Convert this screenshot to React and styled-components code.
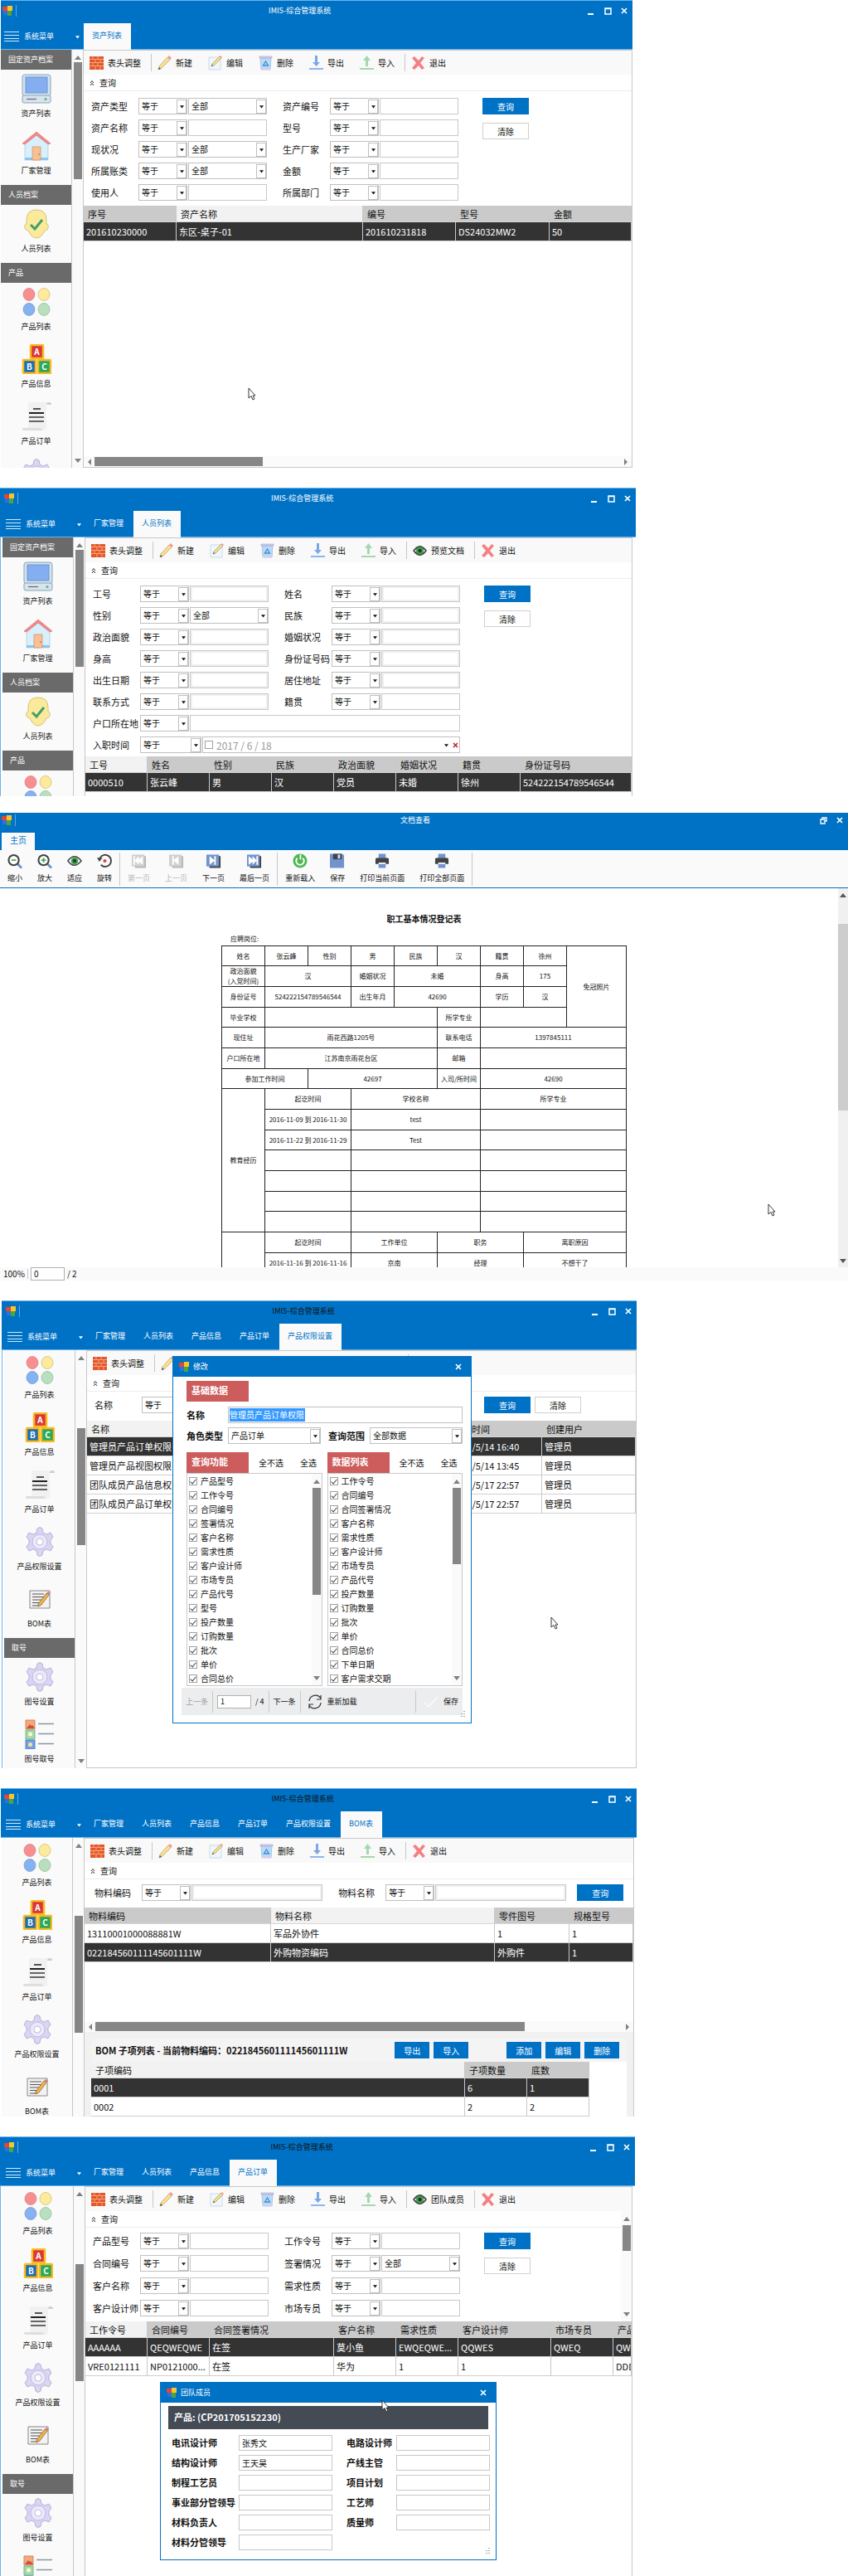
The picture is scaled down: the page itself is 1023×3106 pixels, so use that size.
import React, { useId } from 'react'
import styled, { createGlobalStyle, css } from 'styled-components'

const BLUE = '#0072c6'

const GlobalStyle = createGlobalStyle`
  * {
    box-sizing: border-box;
  }

  body {
    margin: 0;
    background: #ffffff;
    color: #111111;
    font-family: 'Noto Sans CJK SC', 'Noto Sans', sans-serif;
    font-size: 11px;
    line-height: 16px;
  }

  button, input, select {
    font: inherit;
    color: inherit;
    margin: 0;
    padding: 0;
    border: 0;
    border-radius: 0;
    background: none;
    outline: none;
  }

  a {
    color: inherit;
    text-decoration: none;
  }
`

/* ---------- window frame ---------- */

const Page = styled.main`
  display: flex;
  flex-direction: column;
  gap: 24px;
  overflow: hidden;
`

const WindowFrame = styled.section`
  position: relative;
  width: ${p => p.$width || '75%'};
  margin-left: ${p => p.$left || 0}px;
`

const Chrome = styled.header`
  height: 60px;
  padding-left: ${p => p.$inset}px;
  background: ${BLUE};
  border-top: 1px solid #6cb4ea;
  border-bottom: 1px solid #6cb4ea;
  color: #ffffff;
`

const TitleRow = styled.div`
  display: flex;
  align-items: center;
  height: 24px;
  padding-left: 2px;
`

const LogoBox = styled.span`
  display: flex;
  align-items: center;
  height: 14px;
  padding-right: 4px;
  border-right: 1px solid #5fa6dc;
`

const Title = styled.h1`
  flex: 1;
  margin: 0;
  font-size: 9px;
  font-weight: 400;
  text-align: center;
  color: ${p => (p.$dark ? '#111111' : '#ffffff')};
`

const FrameButton = styled.button`
  display: flex;
  align-items: center;
  justify-content: center;
  width: 20px;
  height: 16px;
`

const TabRow = styled.nav`
  display: flex;
  gap: 1px;
  height: 35px;
  padding-top: 3px;
`

const MenuButton = styled.button`
  display: flex;
  flex: none;
  align-items: center;
  gap: 6px;
  width: 99px;
  padding: 0 4px;
  font-size: 9px;

  svg:last-child {
    margin-left: auto;
  }
`

const Tab = styled.a`
  padding: 6px 11px 0 10px;
  font-size: 9px;
  line-height: 18px;
  white-space: nowrap;
  ${p => p.$active && css`
    background: #fafafa;
    color: ${BLUE};
  `}
`

const Body = styled.div`
  display: grid;
  grid-template-columns: 99px minmax(0, 1fr);
  min-height: ${p => p.$min}px;
  padding: 0 ${p => p.$right || 0}px 0 ${p => p.$inset}px;
  border-left: ${p => (p.$inset > 1 ? '1px solid #6cb4ea' : '0')};
`

const Content = styled.div`
  display: flex;
  flex-direction: column;
  border: 1px solid #c8c8c8;
  border-bottom-width: ${p => (p.$cut ? 0 : 1)}px;
`

/* ---------- sidebar ---------- */

const Sidebar = styled.aside`
  display: flex;
  height: 0;
  min-height: 100%;
  background: #fafafa;
`

const SideList = styled.div`
  flex: 1;
  height: 100%;
  padding-top: ${p => (p.$scrolled ? 1 : 0)}px;
  overflow: hidden;
  border-right: 1px solid #c8c8c8;
`

const SideHeading = styled.h2`
  height: 24px;
  margin: 0;
  padding-left: 9px;
  background: #6a6a6a;
  color: #ffffff;
  font-size: 9px;
  font-weight: 400;
  line-height: 23px;

  * + & {
    margin-top: 1px;
  }
`

const SideItem = styled.a`
  display: flex;
  flex-direction: column;
  align-items: center;
  gap: 5px;
  height: 69px;
  padding-top: 5px;
  font-size: 9px;
  line-height: 14px;
`

const VBar = styled.div`
  display: flex;
  flex-direction: column;
  align-items: center;
  justify-content: space-between;
  width: ${p => p.$width || 13}px;
  padding: 5px 0;
  background: #fafafa;
`

const VThumb = styled.span`
  width: 10px;
  height: ${p => p.$size}px;
  margin: ${p => p.$top}px 0 auto;
  background: #868686;
`

const HBar = styled.div`
  display: flex;
  align-items: center;
  gap: 2px;
  height: 13px;
  padding: 0 3px;
  background: #fafafa;
`

const HThumb = styled.span`
  width: ${p => p.$width};
  height: 11px;
  margin-right: auto;
  background: #868686;
`

/* ---------- toolbar and query form ---------- */

const Toolbar = styled.div`
  display: flex;
  align-items: center;
  height: 29px;
  background: #f9f9f9;
  font-size: 10px;
`

const ToolButton = styled.button`
  display: flex;
  align-items: center;
  gap: 5px;
  padding: 0 12px 0 7px;
  white-space: nowrap;
`

const Divider = styled.i`
  flex: none;
  width: 1px;
  height: ${p => p.$height || 21}px;
  background: #c8c8c8;
`

const QueryHead = styled.div`
  display: flex;
  align-items: center;
  gap: 6px;
  height: 20px;
  padding-left: 7px;
  border-bottom: 1px solid #ededed;
  font-size: 10px;
`

const QueryRow = styled.div`
  display: flex;
`

const QueryMain = styled.div`
  flex: 1;
`

const QueryForm = styled.form`
  display: flex;
  align-items: flex-start;
  gap: ${p => p.$gap || 29}px;
  padding: ${p => p.$pad};
`

const FieldGrid = styled.div`
  display: grid;
  flex: ${p => (p.$cols ? 1 : 'none')};
  grid-template-columns: ${p => p.$cols || '212px 212px'};
  gap: ${p => p.$rowGap || 6}px 19px;
`

const FieldBox = styled.div`
  display: flex;
  gap: 1px;
  height: 20px;
  grid-column: ${p => (p.$wide ? '1 / -1' : 'auto')};
`

const FieldLabel = styled.label`
  width: 56px;
  line-height: 20px;
  white-space: nowrap;
`

const SelectBox = styled.span`
  display: flex;
  align-items: center;
  flex: ${p => (p.$width ? 'none' : 1)};
  width: ${p => (p.$width ? `${p.$width}px` : 'auto')};
  min-width: 0;
  height: 20px;
  border: 1px solid #c0c0c0;
  background: #ffffff;
  font-size: 10px;

  select {
    flex: 1;
    min-width: 0;
    height: 18px;
    padding-left: 3px;
    appearance: none;
  }
`

const DropMark = styled.span`
  display: flex;
  align-items: center;
  justify-content: center;
  width: 12px;
  height: 17px;
  border: 1px solid #c0c0c0;
  pointer-events: none;
`

const TextInput = styled.input`
  flex: 1;
  width: 100%;
  min-width: 0;
  height: 20px;
  padding: 0 3px;
  border: 1px solid #c8c8c8;
  background: #ffffff;
  font-size: 10px;
  box-shadow: ${p => (p.$muted ? 'inset 0 0 0 2px #f0f0f0' : 'none')};
`

const DateBox = styled.span`
  display: flex;
  align-items: center;
  flex: 1;
  gap: 4px;
  padding-left: 2px;
  border: 1px solid #c0c0c0;
  color: #9a9a9a;
  font-size: 12px;

  input[type='text'] {
    flex: 1;
    min-width: 0;
    height: 18px;
  }
`

const Actions = styled.div`
  display: flex;
  flex-direction: ${p => (p.$inline ? 'row' : 'column')};
  gap: ${p => (p.$inline ? 5 : 10)}px;
`

const ActionButton = styled.button`
  width: ${p => p.$width || 56}px;
  height: 20px;
  border: 1px solid ${p => (p.$plain ? '#d0d0d0' : BLUE)};
  background: ${p => (p.$plain ? '#ffffff' : BLUE)};
  color: ${p => (p.$plain ? '#111111' : '#ffffff')};
  font-size: 10px;
  line-height: 17px;
`

/* ---------- data grid ---------- */

const Table = styled.table`
  width: ${p => p.$width || '100%'};
  table-layout: fixed;
  border-collapse: separate;
  border-spacing: 0;

  th, td {
    overflow: hidden;
    font-weight: 400;
    text-align: left;
    white-space: nowrap;
    border-right: 1px solid #c8c8c8;
  }

  th {
    height: 20px;
    padding: 0 0 0 5px;
    border-bottom: 1px solid #d8d8d8;
  }

  td {
    height: 23px;
    padding: 0 0 0 3px;
    border-bottom: 1px solid #d0d0d0;
  }
`

const HeadCell = styled.th`
  background: ${p => (p.$sorted ? '#f2f2f2' : '#cacaca')};
`

const Row = styled.tr`
  background: ${p => (p.$selected ? '#333333' : '#ffffff')};
  color: ${p => (p.$selected ? '#ffffff' : '#111111')};
`

const GridSpace = styled.div`
  flex: 1;
  min-height: ${p => p.$min || 0}px;
`

/* ---------- BOM sub list ---------- */

const SubPanel = styled.div`
  display: flex;
  flex: 1;
  flex-direction: column;
  padding: 8px 8px 0;
  background: #f1f1f1;
`

const SubHead = styled.div`
  display: flex;
  align-items: center;
  gap: 4px;
  height: 28px;
  padding: 0 9px 0 5px;
  background: #f4f4f4;
`

const SubTitle = styled.strong`
  flex: 1;
  font-weight: 700;
`

const SubGroup = styled.div`
  display: flex;
  gap: 5px;
  margin-left: ${p => p.$space || 0}px;
`

const SubBody = styled.div`
  flex: 1;
  background: #ffffff;
`

/* ---------- dialogs ---------- */

const DialogFrame = styled.div`
  position: absolute;
  top: ${p => p.$top}px;
  left: ${p => p.$left}px;
  width: ${p => p.$width}px;
  border: 1px solid ${BLUE};
  background: #ffffff;
`

const DialogHead = styled.div`
  display: flex;
  align-items: center;
  gap: 5px;
  height: 24px;
  padding: 0 5px 0 7px;
  background: ${BLUE};
  color: #ffffff;
  font-size: 9px;

  button {
    margin-left: auto;
  }
`

const GripSvg = styled.svg`
  position: absolute;
  right: 7px;
  bottom: 7px;
`

const RightsBody = styled.div`
  padding: 5px 10px 9px;
`

const RightsForm = styled.div`
  display: grid;
  grid-template-columns: 50px 112px 59px 1fr;
  row-gap: 5px;
  padding: 6px 0 10px 6px;

  label {
    font-weight: 700;
    line-height: 20px;
  }

  label:nth-of-type(3) {
    padding-left: 9px;
  }
`

const NameBox = styled.span`
  display: flex;
  align-items: center;
  grid-column: 2 / -1;
  height: 20px;
  border: 1px solid #c0c0c0;
  font-size: 10px;
`

const PickedInput = styled.input`
  width: 91px;
  height: 16px;
  margin-left: 1px;
  background: #3399ff;
  color: #ffffff;
`

const Tag = styled.h3`
  width: 75px;
  height: 25px;
  margin: 0 0 0 ${p => p.$indent || 0}px;
  padding-left: 6px;
  background: #cd5c5c;
  color: #ffffff;
  font-size: 11px;
  font-weight: 700;
  line-height: 23px;
`

const PickColumns = styled.div`
  display: grid;
  grid-template-columns: 1fr 1fr;
  gap: 6px;
  padding-left: 6px;
`

const PickHead = styled.div`
  display: flex;
  font-size: 10px;

  button {
    margin-left: 12px;
  }

  button + button {
    margin-left: 20px;
  }
`

const PickList = styled.div`
  display: flex;
  border: 1px solid #c8c8c8;
`

const PickItems = styled.div`
  flex: 1;
`

const PickItem = styled.label`
  display: flex;
  align-items: center;
  gap: 4px;
  height: 17px;
  padding-left: 2px;
  font-size: 10px;
  white-space: nowrap;
`

const Check = styled.input`
  position: relative;
  width: 10px;
  height: 10px;
  border: 1px solid #a0a0a0;
  background: #ffffff;
  appearance: none;

  &:checked::after {
    content: '';
    position: absolute;
    top: 0;
    left: 2px;
    width: 3px;
    height: 6px;
    border: solid #444444;
    border-width: 0 1px 1px 0;
    transform: rotate(40deg);
  }
`

const RightsFoot = styled.div`
  display: flex;
  align-items: center;
  gap: 5px;
  height: 33px;
  margin-top: 2px;
  padding: 0 5px;
  background: #ecedef;
  font-size: 9px;

  button {
    display: flex;
    align-items: center;
    gap: 6px;
  }

  button:disabled {
    color: #a0a0a0;
  }
`

const PageInput = styled.input`
  width: 41px;
  height: 16px;
  padding-left: 3px;
  border: 1px solid #b0b0b0;
  background: #ffffff;
`

const FootSpace = styled.span`
  flex: 1;
`

const TeamBody = styled.div`
  padding: 4px 9px 11px;
`

const TeamBar = styled.div`
  height: 28px;
  padding-left: 7px;
  background: #444b55;
  color: #ffffff;
  font-weight: 700;
  line-height: 27px;
`

const TeamColumns = styled.div`
  display: flex;
  gap: 17px;
  padding: 7px 4px 0;
`

const TeamColumn = styled.div`
  display: grid;
  grid-template-columns: ${p => p.$label}px 113px;
  grid-auto-rows: 19px;
  row-gap: 5px;

  label {
    font-weight: 700;
    line-height: 18px;
  }

  input {
    height: 19px;
  }
`

const Pointer = styled.svg`
  position: absolute;
  top: ${p => p.$top}px;
  left: ${p => p.$left}px;
  width: 10px;
  height: 16px;
`

/* ---------- document viewer ---------- */

const DocFrame = styled.section`
  position: relative;
  margin-top: -4px;
`

const DocChrome = styled.header`
  display: flex;
  flex-direction: column;
  justify-content: space-between;
  height: 45px;
  padding-top: 1px;
  background: ${BLUE};
  color: #ffffff;

  > div {
    height: 16px;
  }
`

const DocTab = styled.a`
  width: 40px;
  height: 21px;
  margin-left: 2px;
  background: #fafafa;
  color: ${BLUE};
  font-size: 10px;
  line-height: 18px;
  text-align: center;
`

const DocToolbar = styled.div`
  display: flex;
  align-items: center;
  height: 46px;
  border-bottom: 1px solid ${BLUE};
  background: #fafafa;
`

const DocTool = styled.button`
  display: flex;
  flex-direction: column;
  align-items: center;
  gap: 4px;
  padding: 0 9px;
  font-size: 9px;
  line-height: 14px;
  white-space: nowrap;

  &:disabled {
    color: #b8b8b8;
  }
`

const DocView = styled.div`
  display: flex;
  height: 457px;
`

const DocPage = styled.div`
  flex: 1;
  height: 100%;
  padding: 28px 0 0 12px;
  overflow: hidden;
`

const DocTitle = styled.h2`
  margin: 0;
  font-size: 10px;
  font-weight: 700;
  line-height: 18px;
  text-align: center;
`

const Sheet = styled.table`
  width: 489px;
  margin: 0 auto;
  table-layout: fixed;
  border-collapse: collapse;
  font-size: 8px;
  line-height: 12px;

  caption {
    padding: 9px 0 2px 11px;
    text-align: left;
  }

  td {
    padding: 0;
    border: 1px solid #222222;
    text-align: center;
    white-space: nowrap;
  }

  tr {
    height: 25px;
  }

  tr:nth-child(3n + 1) {
    height: 24px;
  }
`

const DocBar = styled.div`
  display: flex;
  flex-direction: column;
  align-items: center;
  width: 12px;
  padding: 4px 0;
  background: #f0f0f0;

  span {
    flex: none;
    width: 12px;
    height: 225px;
    margin: 31px 0 auto;
    background: #cdcdcd;
  }
`

const StatusBar = styled.footer`
  display: flex;
  align-items: center;
  gap: 3px;
  height: 16px;
  padding-left: 4px;
  background: #fafafa;
  font-size: 10px;
`

/* ---------- drawings ---------- */

const Logo = () => (
  <svg width='12' height='12' viewBox='0 0 12 12'>
    <path d='M0 1h6v7H3V6H0z' fill='#e2472f' />
    <path d='M6 0h6v6H6z' fill='#f6c52d' />
    <path d='M6 6h5v6H6z' fill='#4ea53a' />
    <path d='M1 6h5v5H1z' fill='#2f6fe0' />
  </svg>
)

const Triangle = ({ dir = 'down', size = 8, color = '#808080' }) => {
  const paths = {
    down: 'M0 2h8L4 7z',
    up: 'M0 7h8L4 2z',
    left: 'M6 0v8L2 4z',
    right: 'M2 0v8l4-4z'
  }
  return (
    <svg width={size} height={size} viewBox='0 0 8 8'>
      <path d={paths[dir]} fill={color} />
    </svg>
  )
}

const MinIcon = () => (
  <svg width='8' height='10' viewBox='0 0 8 10'><path d='M0 8h7v2H0z' fill='#fff' /></svg>
)

const MaxIcon = () => (
  <svg width='9' height='9' viewBox='0 0 9 9'>
    <path d='M1 1h7v7H1zM1 1.5h7' fill='none' stroke='#fff' strokeWidth='1.5' />
  </svg>
)

const RestoreIcon = () => (
  <svg width='9' height='9' viewBox='0 0 9 9'>
    <path d='M3 2.500V1h5v4H6.500M1 3h5v5H1z' fill='none' stroke='#fff' strokeWidth='1.300' />
  </svg>
)

const CloseIcon = () => (
  <svg width='8' height='8' viewBox='0 0 8 8'>
    <path d='M1 1l6 6M7 1L1 7' stroke='#fff' strokeWidth='1.700' />
  </svg>
)

const Grip = () => (
  <GripSvg width='7' height='7' viewBox='0 0 7 7'>
    <path d='M5 0h2v1H5zM5 3h2v1H5zM5 6h2v1H5zM2 3h2v1H2zM2 6h2v1H2z' fill='#a8a8a8' />
  </GripSvg>
)

const Lines = () => (
  <svg width='18' height='14' viewBox='0 0 18 14'>
    <path d='M0 1.500h18M0 5.500h18M0 9.500h18M0 12.500h18' stroke='#d5e8f6' strokeWidth='1' />
  </svg>
)

const Chevrons = () => (
  <svg width='6' height='8' viewBox='0 0 6 8'>
    <path d='M1 4l2-2.500L5 4M1 7l2-2.500L5 7' fill='none' stroke='#333' strokeWidth='1' />
  </svg>
)

const toolIcons = {
  header: (
    <>
      <path d='M0 1h17v16H0z' fill='#e2582c' />
      <path d='M0 4.500h17M0 8.500h17M0 12.500h17M4 1v3M10 1v3M7 5v3M13 5v3M4 9v3M10 9v3M7 13v4M13 13v4' stroke='#f9a47c' />
    </>
  ),
  create: (
    <>
      <path d='M2 13L12 2l3 3L5 15l-4 2z' fill='#fbe08c' stroke='#b09a68' strokeWidth='0.700' />
      <path d='M12 2l2-2 3 3-2 2z' fill='#f49a9a' />
      <path d='M1 17l1-3 2 2z' fill='#555' />
    </>
  ),
  edit: (
    <>
      <path d='M1 2h14v15H1z' fill='#eff7fc' stroke='#bfd5e3' strokeWidth='0.800' />
      <path d='M5 10l9-9 2 2-9 9-3 1z' fill='#fbe08c' stroke='#9a8a60' strokeWidth='0.700' />
      <path d='M14 1l1-1 2 2-1 1z' fill='#f49a9a' />
      <path d='M4 13l1-2 1 1z' fill='#444' />
    </>
  ),
  remove: (
    <>
      <path d='M2 3h13l-1 14H3z' fill='#b8dcf7' stroke='#9ab8d8' strokeWidth='0.700' />
      <path d='M1 1h15v2H1z' fill='#d8cdef' stroke='#a8a0c8' strokeWidth='0.600' />
      <path d='M3 15h11v2H3z' fill='#d8cdef' />
      <path d='M8.500 7l3 5h-6z' fill='none' stroke='#4a86d8' strokeWidth='1.300' />
    </>
  ),
  exporting: (
    <>
      <path d='M7 0h3v8h3l-4.500 5L4 8h3z' fill='#7ba7e6' />
      <path d='M0 15h17v2H0z' fill='#8fb6ee' />
    </>
  ),
  importing: (
    <>
      <path d='M7 13h3V6h3L8.500 0 4 6h3z' fill='#a5d8b0' />
      <path d='M0 15h17v2H0z' fill='#a5d8b0' />
    </>
  ),
  quit: <path d='M1 3l3-2 5 5 4-5 3 2-5 6 5 6-3 2-4-5-5 5-3-2 5-6z' fill='#f48084' />,
  view: (
    <>
      <path d='M0 9q8.500-12 17 0-8.500 12-17 0z' fill='#3e4347' />
      <path d='M2 9q6.500-7 13 0-6.500 7-13 0z' fill='#fff' />
      <circle cx='8.500' cy='9' r='4.600' fill='#43a047' />
      <circle cx='8.500' cy='9' r='2.200' fill='#263238' />
    </>
  )
}

const ToolIcon = ({ name }) => (
  <svg width='17' height='18' viewBox='0 0 17 18'>{toolIcons[name]}</svg>
)

const gear = (
  <>
    <path
      d='M15 2q3-3 6 0l1 5 4 2 5-2 3 5-3 4v4l3 4-3 5-5-2-4 2-1 5q-3 3-6 0l-1-5-4-2-5 2-3-5 3-4v-4l-3-4 3-5 5 2 4-2z'
      fill='#dbd4f4' stroke='#aaa4c8' strokeWidth='0.800'
    />
    <circle cx='18' cy='18' r='9' fill='#ece8fb' stroke='#b5afd0' strokeWidth='0.800' />
    <circle cx='18' cy='18' r='4' fill='#fff' stroke='#b5afd0' strokeWidth='0.800' />
  </>
)

const sideIcons = {
  computer: (
    <>
      <rect x='1' y='1' width='34' height='26' rx='3' fill='#cfe3f2' stroke='#8fa3b3' />
      <rect x='5' y='4' width='26' height='19' fill='#85aef0' stroke='#6f93cc' />
      <rect x='1' y='26' width='34' height='9' rx='2' fill='#d5e4ee' stroke='#8fa3b3' />
      <path d='M6 30.500h12' stroke='#667' strokeWidth='1.200' />
      <circle cx='29' cy='30.500' r='1.600' fill='#5cb87a' />
    </>
  ),
  house: (
    <>
      <path d='M4 14L18 3l14 11v21H4z' fill='#d8f0fb' stroke='#a8c8d8' strokeWidth='0.700' />
      <path d='M4 32h28v3H4z' fill='#8fc4ee' />
      <path d='M13 19h10v16H13z' fill='#f9c193' stroke='#c98f62' strokeWidth='0.700' />
      <circle cx='21' cy='28' r='0.700' fill='#555' />
      <path d='M1 15L18 1l17 14-3 1L18 5 4 16z' fill='#f28a8c' stroke='#d56a6c' strokeWidth='0.600' />
    </>
  ),
  face: (
    <>
      <path d='M18 1q12 0 12 12v5q3 0 2 5-1 3-4 3-4 9-10 9T8 26q-3 0-4-3-1-5 2-5v-5Q6 1 18 1z' fill='#fbea9c' stroke='#c9b96c' strokeWidth='0.800' />
      <path d='M11 19l5 5 9-11' fill='none' stroke='#43a069' strokeWidth='3' />
    </>
  ),
  circles: (
    <>
      <ellipse cx='9' cy='9' rx='7' ry='7.500' fill='#f78f90' stroke='#d67a7c' strokeWidth='0.700' />
      <ellipse cx='27' cy='9' rx='7' ry='7.500' fill='#fdea9c' stroke='#c9b96c' strokeWidth='0.700' />
      <ellipse cx='9' cy='27' rx='7' ry='7.500' fill='#85b2f0' stroke='#6f93cc' strokeWidth='0.700' />
      <ellipse cx='27' cy='27' rx='7' ry='7.500' fill='#b8e0bf' stroke='#8ab893' strokeWidth='0.700' />
    </>
  ),
  blocks: (
    <>
      {[['A', 10, 0, '#d8383a'], ['B', 1, 18, '#1f6fb0'], ['C', 19, 18, '#2ba95a']].map(([letter, x, y, fill]) => (
        <g key={letter}>
          <rect x={x + 1} y={y + 1} width='15' height='16' rx='1' fill={fill} stroke='#fbb91e' strokeWidth='2.500' />
          <text x={x + 8.5} y={y + 13} fill='#fff' fontSize='10' fontWeight='700' textAnchor='middle'>{letter}</text>
        </g>
      ))}
    </>
  ),
  scroll: (
    <>
      <path d='M8 1h26q2 1 1 3h-5v27q0 4-3 4H2q-2-1-1-3h7z' fill='#f1f1f1' />
      <path d='M30 4q0-3 3-3t3 3z' fill='#cfcfcf' />
      <path d='M1 32h23q0 3 2 3H3q-2 0-2-3z' fill='#dedede' />
      <path d='M14 9h9' stroke='#555' strokeWidth='2' />
      <path d='M9 14h18' stroke='#222' strokeWidth='2' />
      <path d='M9 19h18M9 24h18' stroke='#666' strokeWidth='2' />
    </>
  ),
  gear,
  note: (
    <>
      <path d='M6 8h24v21H6z' fill='#f2f2f2' stroke='#888' />
      <path d='M9 12h14M9 15.500h14M9 19h11M9 22.500h9M9 26h9' stroke='#555' />
      <path d='M16 24l10-13 3 2-9 12-4 2z' fill='#f0b44a' stroke='#7a5a2a' strokeWidth='0.700' />
      <path d='M26 11l2-2 3 2-2 2z' fill='#d67a7c' />
    </>
  ),
  list: (
    <>
      <path d='M1 1h11v11H1z' fill='#f7a77a' stroke='#cf875c' />
      <path d='M2 11l4-5 2 2 1-1 3 4z' fill='#c9533a' />
      <path d='M1 13h11v11H1z' fill='#9fd9ac' stroke='#7cb58a' />
      <circle cx='6.500' cy='18' r='2.500' fill='#fff7c8' />
      <path d='M1 25h11v11H1z' fill='#6ea3ea' stroke='#5580c0' />
      <circle cx='6.500' cy='30.500' r='2.500' fill='#fbe48a' />
      <path d='M16 5.500h19M16 17.500h19M16 29.500h19' stroke='#8898a5' strokeWidth='1.500' />
    </>
  )
}

const SideIcon = ({ name }) => (
  <svg width='36' height='36' viewBox='0 0 36 36'>{sideIcons[name]}</svg>
)

const stacked = (color, shade, marks) => (
  <>
    <path d='M2 3h16v15H4z' fill={shade} />
    <path d='M0 1h16v15H0z' fill={color} />
    <path d={marks} fill='#fff' />
  </>
)

const lens = sign => (
  <>
    <path d='M13 13l5 5' stroke='#7090cc' strokeWidth='3' />
    <circle cx='8' cy='8' r='6.500' fill='#fff' stroke='#3f4448' strokeWidth='2.200' />
    <path d={sign} stroke='#3fae49' strokeWidth='1.800' />
  </>
)

const printer = (
  <>
    <path d='M5 0h9v5H5zM5 13h9v5H5z' fill='#7393ce' />
    <path d='M1 7q0-2 3-2h11q3 0 3 2v6h-4v-2H5v2H1z' fill='#3f4448' />
  </>
)

const docIcons = {
  zoomOut: lens('M5 8h6'),
  zoomIn: lens('M5 8h6M8 5v6'),
  fit: (
    <>
      <path d='M1 9q8-11 17 0-9 11-17 0z' fill='#fff' stroke='#3f4448' strokeWidth='1.600' />
      <circle cx='9.500' cy='9' r='4.600' fill='#43a047' />
      <circle cx='9.500' cy='9' r='2.200' fill='#263238' />
    </>
  ),
  rotate: (
    <>
      <path d='M4 5a7.500 7.500 0 1 1 1 9' fill='none' stroke='#3f4448' strokeWidth='2' />
      <path d='M0 5h7L3 10z' fill='#3f4448' />
      <circle cx='10' cy='9' r='2.200' fill='#e2472f' />
    </>
  ),
  first: stacked('#d0d0d0', '#b8b8b8', 'M2 3h2v5l5-5v4l5-4v11l-5-4v4L4 9v5H2z'),
  prev: stacked('#d0d0d0', '#b8b8b8', 'M4 3h2v5l6-5v11L6 9v5H4z'),
  next: stacked('#7393ce', '#3f4448', 'M12 3h-2v5L4 3v11l6-5v5h2z'),
  last: stacked('#7393ce', '#3f4448', 'M14 3h-2v5L7 3v4L2 3v11l5-4v4l5-5v5h2z'),
  reload: (
    <>
      <circle cx='9.500' cy='9' r='9' fill='#4cb84f' />
      <path d='M6 5.500a5 5 0 1 0 7 0M10 1v6' fill='none' stroke='#fff' strokeWidth='2' />
    </>
  ),
  save: (
    <>
      <path d='M0 0h16l2 2v16H0z' fill='#7393ce' />
      <path d='M4 0h11v7H4z' fill='#3f4448' />
      <path d='M10 1h3v5h-3z' fill='#dde' />
    </>
  ),
  printer
}

const DocIcon = ({ name }) => (
  <svg width='18' height='19' viewBox='0 0 19 19'>{docIcons[name]}</svg>
)

const Cursor = ({ top, left }) => (
  <Pointer $top={top} $left={left} viewBox='0 0 10 16'>
    <path d='M1 1v12l3-2.500L6 15l2-1-2-4h3z' fill='#fff' stroke='#222' strokeWidth='0.900' />
  </Pointer>
)

/* ---------- shared parts ---------- */

const Select = ({ id, label, value, width }) => (
  <SelectBox $width={width}>
    <select id={id} aria-label={label} defaultValue={value}>
      <option>{value}</option>
    </select>
    <DropMark><Triangle size={5} color='#111' /></DropMark>
  </SelectBox>
)

const Field = ({ label, value, muted, wide }) => {
  const id = useId()
  return (
    <FieldBox $wide={wide}>
      <FieldLabel htmlFor={id}>{label}</FieldLabel>
      <Select label={`${label}条件`} value='等于' width={59} />
      {value
        ? <Select id={id} value={value} />
        : <TextInput id={id} type='text' $muted={muted} />}
    </FieldBox>
  )
}

const DateField = ({ label }) => {
  const id = useId()
  return (
    <FieldBox $wide>
      <FieldLabel htmlFor={id}>{label}</FieldLabel>
      <Select label={`${label}条件`} value='等于' width={74} />
      <DateBox>
        <Check type='checkbox' aria-label={label} />
        <input id={id} type='text' defaultValue='2017 / 6 / 18' />
        <Triangle size={5} color='#111' />
        <svg width='9' height='9' viewBox='0 0 9 9'>
          <path d='M2 2l5 5M7 2L2 7' stroke='#b3202c' strokeWidth='1.500' />
        </svg>
      </DateBox>
    </FieldBox>
  )
}

const SearchActions = ({ inline }) => (
  <Actions $inline={inline}>
    <ActionButton type='button'>查询</ActionButton>
    <ActionButton type='button' $plain>清除</ActionButton>
  </Actions>
)

const MainTools = ({ extra }) => (
  <Toolbar>
    <ToolButton><ToolIcon name='header' />表头调整</ToolButton>
    <Divider />
    <ToolButton><ToolIcon name='create' />新建</ToolButton>
    <ToolButton><ToolIcon name='edit' />编辑</ToolButton>
    <ToolButton><ToolIcon name='remove' />删除</ToolButton>
    <ToolButton><ToolIcon name='exporting' />导出</ToolButton>
    <ToolButton><ToolIcon name='importing' />导入</ToolButton>
    <Divider />
    {extra && (
      <>
        <ToolButton><ToolIcon name='view' />{extra}</ToolButton>
        <Divider />
      </>
    )}
    <ToolButton><ToolIcon name='quit' />退出</ToolButton>
  </Toolbar>
)

const QueryTitle = () => <QueryHead><Chevrons />查询</QueryHead>

const DataTable = ({ cols, rows, sorted, selected, width }) => (
  <Table $width={width}>
    <colgroup>
      {cols.map(([name, w]) => <col key={name} width={w} />)}
    </colgroup>
    <thead>
      <tr>
        {cols.map(([name], i) => <HeadCell key={name} $sorted={i === sorted}>{name}</HeadCell>)}
      </tr>
    </thead>
    <tbody>
      {rows.map((row, i) => (
        <Row key={row[0]} $selected={i === selected}>
          {row.map((cell, j) => <td key={j}>{cell}</td>)}
        </Row>
      ))}
    </tbody>
  </Table>
)

const assetMenu = [
  ['固定资产档案', [['computer', '资产列表'], ['house', '厂家管理']]],
  ['人员档案', [['face', '人员列表']]]
]

const productItems = [
  ['circles', '产品列表'],
  ['blocks', '产品信息'],
  ['scroll', '产品订单'],
  ['gear', '产品权限设置'],
  ['note', 'BOM表']
]

const fullMenu = [...assetMenu, ['产品', productItems]]
const lowerMenu = [['', productItems], ['取号', [['gear', '图号设置'], ['list', '图号取号']]]]

const SideMenu = ({ scrolled, cut }) => (
  <Sidebar>
    <SideList $scrolled={scrolled}>
      {(scrolled ? lowerMenu : fullMenu).map(([heading, items]) => (
        <React.Fragment key={heading}>
          {heading && <SideHeading>{heading}</SideHeading>}
          {items.map(([icon, name]) => (
            <SideItem key={name} href='#'><SideIcon name={icon} />{name}</SideItem>
          ))}
        </React.Fragment>
      ))}
    </SideList>
    <VBar>
      <Triangle dir='up' />
      <VThumb $top={scrolled ? 81 : 2} $size={141} />
      {!cut && <Triangle />}
    </VBar>
  </Sidebar>
)

const AppWindow = ({ left, width, inset, right, min, tabs, active, dark, scrolled, cut, overlay, children }) => (
  <WindowFrame $left={left} $width={width}>
    <Chrome $inset={inset}>
      <TitleRow>
        <LogoBox><Logo /></LogoBox>
        <Title $dark={dark}>IMIS-综合管理系统</Title>
        <FrameButton aria-label='最小化'><MinIcon /></FrameButton>
        <FrameButton aria-label='最大化'><MaxIcon /></FrameButton>
        <FrameButton aria-label='关闭'><CloseIcon /></FrameButton>
      </TitleRow>
      <TabRow>
        <MenuButton><Lines />系统菜单<Triangle size={5} color='#fff' /></MenuButton>
        {tabs.map(tab => <Tab key={tab} href='#' $active={tab === active}>{tab}</Tab>)}
      </TabRow>
    </Chrome>
    <Body $inset={inset - (inset > 1 ? 1 : 0)} $right={right} $min={min}>
      <SideMenu scrolled={scrolled} cut={cut} />
      <Content $cut={cut}>{children}</Content>
    </Body>
    {overlay}
  </WindowFrame>
)

/* ---------- windows ---------- */

const AssetWindow = () => (
  <AppWindow
    left={1} width='calc(75% - 5px)' inset={0} min={504} tabs={['资产列表']} active='资产列表'
    overlay={<Cursor top={467} left={298} />}
  >
    <MainTools />
    <QueryTitle />
    <QueryForm $pad='8px 9px 6px'>
      <FieldGrid>
        <Field label='资产类型' value='全部' />
        <Field label='资产编号' />
        <Field label='资产名称' />
        <Field label='型号' />
        <Field label='现状况' value='全部' />
        <Field label='生产厂家' />
        <Field label='所属账类' value='全部' />
        <Field label='金额' />
        <Field label='使用人' />
        <Field label='所属部门' />
      </FieldGrid>
      <SearchActions />
    </QueryForm>
    <DataTable
      sorted={1}
      selected={0}
      cols={[['序号', 112], ['资产名称', 225], ['编号', 112], ['型号', 113], ['金额']]}
      rows={[['201610230000', '东区-桌子-01', '201610231818', 'DS24032MW2', '50']]}
    />
    <GridSpace />
    <HBar>
      <Triangle dir='left' />
      <HThumb $width='31%' />
      <Triangle dir='right' />
    </HBar>
  </AppWindow>
)

const StaffWindow = () => (
  <AppWindow inset={3} right={4} min={312} tabs={['厂家管理', '人员列表']} active='人员列表' cut>
    <MainTools extra='预览文档' />
    <QueryTitle />
    <QueryForm $pad='8px 9px 4px'>
      <FieldGrid>
        <Field label='工号' muted />
        <Field label='姓名' muted />
        <Field label='性别' value='全部' />
        <Field label='民族' muted />
        <Field label='政治面貌' muted />
        <Field label='婚姻状况' muted />
        <Field label='身高' muted />
        <Field label='身份证号码' muted />
        <Field label='出生日期' muted />
        <Field label='居住地址' muted />
        <Field label='联系方式' muted />
        <Field label='籍贯' />
        <Field label='户口所在地' wide />
        <DateField label='入职时间' />
      </FieldGrid>
      <SearchActions />
    </QueryForm>
    <DataTable
      sorted={0}
      selected={0}
      cols={[['工号', 75], ['姓名', 75], ['性别', 75], ['民族', 75], ['政治面貌', 75], ['婚姻状况', 75], ['籍贯', 75], ['身份证号码']]}
      rows={[['0000510', '张云峰', '男', '汉', '党员', '未婚', '徐州', '524222154789546544']]}
    />
  </AppWindow>
)

const docTools = [
  [['zoomOut', '缩小'], ['zoomIn', '放大'], ['fit', '适应'], ['rotate', '旋转']],
  [['first', '第一页', true], ['prev', '上一页', true], ['next', '下一页'], ['last', '最后一页']],
  [['reload', '重新载入'], ['save', '保存'], ['printer', '打印当前页面'], ['printer', '打印全部页面']]
]

const EmptyRow = () => (
  <tr>
    <td colSpan={2} />
    <td colSpan={3} />
    <td colSpan={3} />
  </tr>
)

const DocWindow = () => (
  <DocFrame>
    <DocChrome>
      <TitleRow>
        <LogoBox><Logo /></LogoBox>
        <Title>文档查看</Title>
        <FrameButton aria-label='还原'><RestoreIcon /></FrameButton>
        <FrameButton aria-label='关闭'><CloseIcon /></FrameButton>
      </TitleRow>
      <DocTab href='#'>主页</DocTab>
    </DocChrome>
    <DocToolbar>
      {docTools.map((group, i) => (
        <React.Fragment key={i}>
          {group.map(([icon, name, off]) => (
            <DocTool key={name} disabled={off}><DocIcon name={icon} />{name}</DocTool>
          ))}
          <Divider $height={40} />
        </React.Fragment>
      ))}
    </DocToolbar>
    <DocView>
      <DocPage>
        <DocTitle>职工基本情况登记表</DocTitle>
        <Sheet>
          <caption>应聘岗位:</caption>
          <colgroup>
            {[52, 52, 52, 52, 52, 52, 52, 52, 72].map((w, i) => <col key={i} width={w} />)}
          </colgroup>
          <tbody>
            <tr>
              <td>姓名</td><td>张云峰</td><td>性别</td><td>男</td><td>民族</td><td>汉</td>
              <td>籍贯</td><td>徐州</td><td rowSpan={4}>免冠照片</td>
            </tr>
            <tr>
              <td>政治面貌<br />(入党时间)</td><td colSpan={2}>汉</td><td>婚姻状况</td>
              <td colSpan={2}>未婚</td><td>身高</td><td>175</td>
            </tr>
            <tr>
              <td>身份证号</td><td colSpan={2}>524222154789546544</td><td>出生年月</td>
              <td colSpan={2}>42690</td><td>学历</td><td>汉</td>
            </tr>
            <tr><td>毕业学校</td><td colSpan={4} /><td>所学专业</td><td colSpan={2} /></tr>
            <tr><td>现住址</td><td colSpan={4}>雨花西路1205号</td><td>联系电话</td><td colSpan={3}>1397845111</td></tr>
            <tr><td>户口所在地</td><td colSpan={4}>江苏南京雨花台区</td><td>邮箱</td><td colSpan={3} /></tr>
            <tr>
              <td colSpan={2}>参加工作时间</td><td colSpan={3}>42697</td>
              <td>入司/所时间</td><td colSpan={3}>42690</td>
            </tr>
            <tr>
              <td rowSpan={7}>教育经历</td><td colSpan={2}>起讫时间</td>
              <td colSpan={3}>学校名称</td><td colSpan={3}>所学专业</td>
            </tr>
            <tr><td colSpan={2}>2016-11-09 到 2016-11-30</td><td colSpan={3}>test</td><td colSpan={3} /></tr>
            <tr><td colSpan={2}>2016-11-22 到 2016-11-29</td><td colSpan={3}>Test</td><td colSpan={3} /></tr>
            <EmptyRow />
            <EmptyRow />
            <EmptyRow />
            <EmptyRow />
            <tr>
              <td rowSpan={2} /><td colSpan={2}>起讫时间</td><td colSpan={2}>工作单位</td>
              <td colSpan={2}>职务</td><td colSpan={2}>离职原因</td>
            </tr>
            <tr>
              <td colSpan={2}>2016-11-16 到 2016-11-16</td><td colSpan={2}>京南</td>
              <td colSpan={2}>经理</td><td colSpan={2}>不想干了</td>
            </tr>
          </tbody>
        </Sheet>
      </DocPage>
      <DocBar>
        <Triangle dir='up' color='#555' />
        <span />
        <Triangle color='#555' />
      </DocBar>
    </DocView>
    <StatusBar>
      100%
      <Divider $height={12} />
      <PageInput aria-label='页码' defaultValue='0' />
      <span>/ 2</span>
    </StatusBar>
    <Cursor top={471} left={926} />
  </DocFrame>
)

const queryFields = ['产品型号', '工作令号', '合同编号', '签署情况', '客户名称', '需求性质', '客户设计师', '市场专员', '产品代号', '型号', '投产数量', '订购数量', '批次', '单价', '合同总价']
const listFields = ['工作令号', '合同编号', '合同签署情况', '客户名称', '需求性质', '客户设计师', '市场专员', '产品代号', '投产数量', '订购数量', '批次', '单价', '合同总价', '下单日期', '客户需求交期']

const PickPanel = ({ title, fields, thumb }) => (
  <div>
    <PickHead>
      <Tag>{title}</Tag>
      <button>全不选</button>
      <button>全选</button>
    </PickHead>
    <PickList>
      <PickItems>
        {fields.map(name => (
          <PickItem key={name}><Check type='checkbox' defaultChecked />{name}</PickItem>
        ))}
      </PickItems>
      <VBar $width={12}>
        <Triangle dir='up' />
        <VThumb $top={4} $size={thumb} />
        <Triangle />
      </VBar>
    </PickList>
  </div>
)

const RightsDialog = () => (
  <DialogFrame role='dialog' aria-label='修改' $top={67} $left={206} $width={361}>
    <DialogHead>
      <Logo />修改
      <FrameButton aria-label='关闭'><CloseIcon /></FrameButton>
    </DialogHead>
    <RightsBody>
      <Tag $indent={6}>基础数据</Tag>
      <RightsForm>
        <label htmlFor='rights-name'>名称</label>
        <NameBox><PickedInput id='rights-name' defaultValue='管理员产品订单权限' /></NameBox>
        <label htmlFor='rights-type'>角色类型</label>
        <Select id='rights-type' value='产品订单' />
        <label htmlFor='rights-range'>查询范围</label>
        <Select id='rights-range' value='全部数据' />
      </RightsForm>
      <PickColumns>
        <PickPanel title='查询功能' fields={queryFields} thumb={129} />
        <PickPanel title='数据列表' fields={listFields} thumb={92} />
      </PickColumns>
      <RightsFoot>
        <button disabled>上一条</button>
        <Divider $height={26} />
        <PageInput aria-label='当前条' defaultValue='1' />
        <span>/ 4</span>
        <Divider $height={26} />
        <button>下一条</button>
        <Divider $height={26} />
        <button>
          <svg width='21' height='20' viewBox='-3 0 21 20'>
            <path d='M2 9a7.500 7.500 0 0 1 14-3M16 2v5h-5M16 11a7.500 7.500 0 0 1-14 3M2 18v-5h5' fill='none' stroke='#333' strokeWidth='1.200' />
          </svg>
          重新加载
        </button>
        <FootSpace />
        <Divider $height={26} />
        <button>
          <svg width='22' height='16' viewBox='-4 0 22 16'>
            <path d='M1 9l5 5L17 2' fill='none' stroke='#fff' strokeWidth='1.200' />
          </svg>
          保存
        </button>
      </RightsFoot>
    </RightsBody>
    <Grip />
  </DialogFrame>
)

const RightsWindow = () => (
  <AppWindow
    left={2} width='calc(75% - 1px)' inset={3} min={504} dark scrolled
    tabs={['厂家管理', '人员列表', '产品信息', '产品订单', '产品权限设置']}
    active='产品权限设置'
    overlay={<><RightsDialog /><Cursor top={381} left={662} /></>}
  >
    <MainTools />
    <QueryTitle />
    <QueryForm $pad='6px 9px 9px' $gap={27}>
      <FieldGrid>
        <Field label='名称' wide />
      </FieldGrid>
      <SearchActions inline />
    </QueryForm>
    <DataTable
      sorted={0}
      selected={0}
      cols={[['名称', 437], ['创建时间', 112], ['创建用户']]}
      rows={[
        ['管理员产品订单权限', '2017/5/14 16:40', '管理员'],
        ['管理员产品视图权限', '2017/5/14 13:45', '管理员'],
        ['团队成员产品信息权限', '2017/5/17 22:57', '管理员'],
        ['团队成员产品订单权限', '2017/5/17 22:57', '管理员']
      ]}
    />
  </AppWindow>
)

const BomWindow = () => (
  <AppWindow
    left={1} inset={2} right={3} min={336} dark scrolled cut
    tabs={['厂家管理', '人员列表', '产品信息', '产品订单', '产品权限设置', 'BOM表']}
    active='BOM表'
  >
    <MainTools />
    <QueryTitle />
    <QueryForm $pad='6px 12px 8px' $gap={13}>
      <FieldGrid $cols='1fr 1fr'>
        <Field label='物料编码' muted />
        <Field label='物料名称' muted />
      </FieldGrid>
      <ActionButton type='button'>查询</ActionButton>
    </QueryForm>
    <DataTable
      sorted={1}
      selected={1}
      cols={[['物料编码', 225], ['物料名称', 270], ['零件图号', 90], ['规格型号']]}
      rows={[
        ['13110001000088881W', '军品外协件', '1', '1'],
        ['022184560111145601111W', '外购物资编码', '外购件', '1']
      ]}
    />
    <GridSpace $min={57} />
    <HBar>
      <Triangle dir='left' />
      <HThumb $width='79%' />
      <Triangle dir='right' />
    </HBar>
    <SubPanel>
      <SubHead>
        <SubTitle>BOM 子项列表 - 当前物料编码：022184560111145601111W</SubTitle>
        <SubGroup>
          <ActionButton $width={42}>导出</ActionButton>
          <ActionButton $width={42}>导入</ActionButton>
        </SubGroup>
        <SubGroup $space={42}>
          <ActionButton $width={42}>添加</ActionButton>
          <ActionButton $width={42}>编辑</ActionButton>
          <ActionButton $width={42}>删除</ActionButton>
        </SubGroup>
      </SubHead>
      <SubBody>
        <DataTable
          width='93%'
          sorted={0}
          selected={0}
          cols={[['子项编码'], ['子项数量', 75], ['底数', 75]]}
          rows={[['0001', '6', '1'], ['0002', '2', '2']]}
        />
      </SubBody>
    </SubPanel>
  </AppWindow>
)

const TeamField = ({ label, value }) => {
  const id = useId()
  return (
    <>
      <label htmlFor={id}>{label}</label>
      <TextInput id={id} type='text' defaultValue={value} />
    </>
  )
}

const TeamDialog = () => (
  <DialogFrame role='dialog' aria-label='团队成员' $top={296} $left={193} $width={406}>
    <DialogHead>
      <Logo />团队成员
      <FrameButton aria-label='关闭'><CloseIcon /></FrameButton>
    </DialogHead>
    <TeamBody>
      <TeamBar>产品: (CP201705152230)</TeamBar>
      <TeamColumns>
        <TeamColumn $label={81}>
          <TeamField label='电讯设计师' value='张秀文' />
          <TeamField label='结构设计师' value='王天昊' />
          <TeamField label='制程工艺员' />
          <TeamField label='事业部分管领导' />
          <TeamField label='材料负责人' />
          <TeamField label='材料分管领导' />
        </TeamColumn>
        <TeamColumn $label={60}>
          <TeamField label='电路设计师' />
          <TeamField label='产线主管' />
          <TeamField label='项目计划' />
          <TeamField label='工艺师' />
          <TeamField label='质量师' />
        </TeamColumn>
      </TeamColumns>
    </TeamBody>
    <Grip />
  </DialogFrame>
)

const OrderWindow = () => (
  <AppWindow
    inset={3} right={3} width='calc(75% - 1px)' min={470} dark scrolled cut
    tabs={['厂家管理', '人员列表', '产品信息', '产品订单']}
    active='产品订单'
    overlay={<><TeamDialog /><Cursor top={317} left={460} /></>}
  >
    <MainTools extra='团队成员' />
    <QueryRow>
      <QueryMain>
        <QueryTitle />
        <QueryForm $pad='6px 9px'>
          <FieldGrid $rowGap={7}>
            <Field label='产品型号' />
            <Field label='工作令号' />
            <Field label='合同编号' />
            <Field label='签署情况' value='全部' />
            <Field label='客户名称' />
            <Field label='需求性质' />
            <Field label='客户设计师' />
            <Field label='市场专员' />
          </FieldGrid>
          <SearchActions />
        </QueryForm>
      </QueryMain>
      <VBar>
        <Triangle dir='up' />
        <VThumb $top={4} $size={31} />
        <Triangle />
      </VBar>
    </QueryRow>
    <DataTable
      sorted={0}
      selected={0}
      cols={[['工作令号', 75], ['合同编号', 75], ['合同签署情况', 150], ['客户名称', 75], ['需求性质', 75], ['客户设计师', 112], ['市场专员', 75], ['产品代号']]}
      rows={[
        ['AAAAAA', 'QEQWEQWE', '在签', '莫小鱼', 'EWQEQWE...', 'QQWES', 'QWEQ', 'QWEQ'],
        ['VRE0121111', 'NP0121000...', '在签', '华为', '1', '1', '', 'DDD']
      ]}
    />
  </AppWindow>
)

const App = () => (
  <>
    <GlobalStyle />
    <Page>
      <AssetWindow />
      <StaffWindow />
      <DocWindow />
      <RightsWindow />
      <BomWindow />
      <OrderWindow />
    </Page>
  </>
)

export default App
